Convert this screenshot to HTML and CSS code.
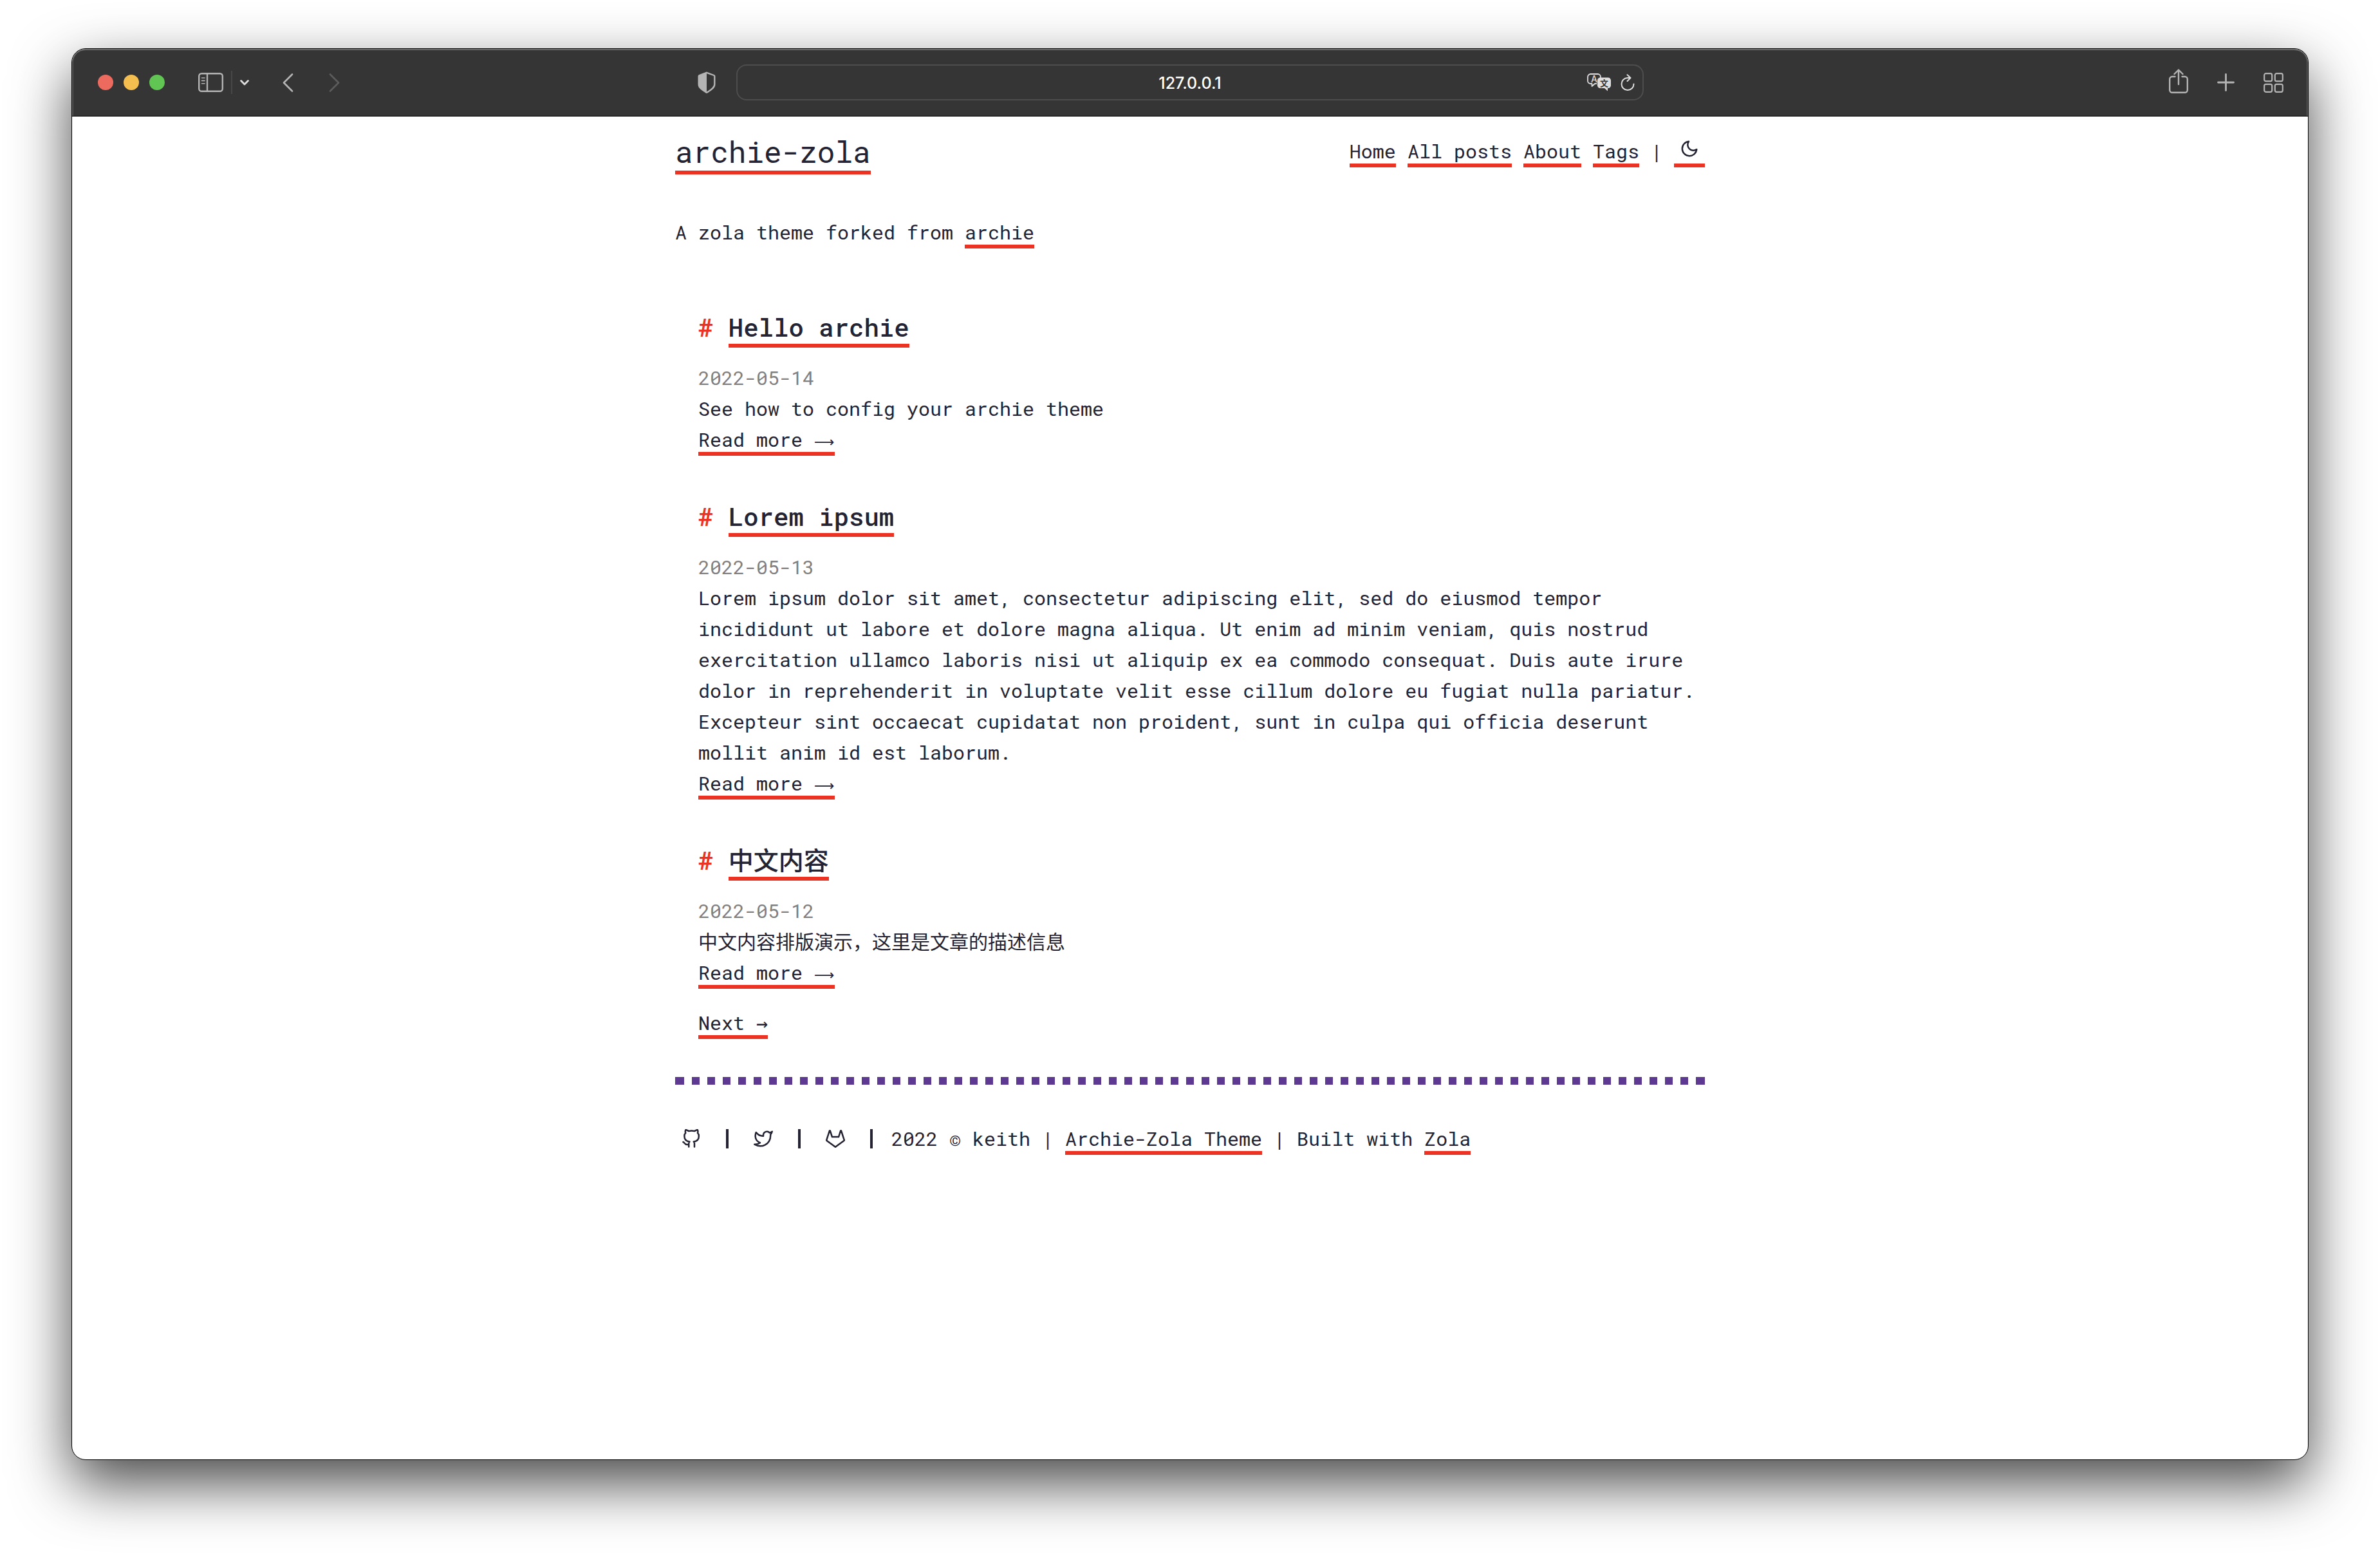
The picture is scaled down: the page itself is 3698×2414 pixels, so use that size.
FILE: index.html
```html
<!DOCTYPE html>
<html lang="en">
<head>
<meta charset="utf-8">
<meta name="viewport" content="width=device-width, initial-scale=1">
<title>archie-zola</title>
<link rel="stylesheet" href="styles.css">
</head>
<body>
<div class="window">
  <div class="toolbar">
    <div class="toolbar-left">
      <div class="lights">
        <button class="light light-close" aria-label="Close"></button>
        <button class="light light-minimize" aria-label="Minimize"></button>
        <button class="light light-zoom" aria-label="Zoom"></button>
      </div>
      <div class="sidebar-group">
        <button class="tool" aria-label="Show sidebar">
          <svg width="39" height="30" viewBox="0 0 39 30" fill="none" stroke="currentColor" stroke-width="2.4"><rect x="1.2" y="1.2" width="36.6" height="27.6" rx="4"/><path d="M14 1v28"/><path d="M5.5 8h4.5M5.5 12.4h4.5M5.5 16.8h4.5" stroke-width="1.6" stroke-linecap="round"/></svg>
        </button>
        <span class="tool-divider"></span>
        <button class="tool tool-bright" aria-label="Tab groups">
          <svg width="14" height="9" viewBox="0 0 14 9" fill="none" stroke="currentColor" stroke-width="2.8" stroke-linecap="round" stroke-linejoin="round"><path d="M1.6 1.6 7 7l5.400-5.400"/></svg>
        </button>
      </div>
      <div class="history">
        <button class="tool" aria-label="Back">
          <svg width="17" height="29" viewBox="0 0 17 29" fill="none" stroke="currentColor" stroke-width="2.600" stroke-linecap="round" stroke-linejoin="round"><path d="M15 1.500 2 14.500l13 13"/></svg>
        </button>
        <button class="tool tool-dim" aria-label="Forward">
          <svg width="17" height="29" viewBox="0 0 17 29" fill="none" stroke="currentColor" stroke-width="2.600" stroke-linecap="round" stroke-linejoin="round"><path d="m2 1.500 13 13-13 13"/></svg>
        </button>
      </div>
      <button class="tool shield" aria-label="Privacy report">
        <svg width="28" height="34" viewBox="0 0 28 34"><path d="M14 1.800 25.300 6c.7.300 1 .8 1 1.500V20c0 6-7 9.500-12.300 12.800C8.700 29.500 1.700 26 1.700 20V7.500c0-.7.300-1.200 1-1.500z" fill="none" stroke="currentColor" stroke-width="2.400"/><path d="M14 1.800v31C8.700 29.500 1.700 26 1.700 20V7.500c0-.7.300-1.200 1-1.500z" fill="currentColor"/></svg>
      </button>
    </div>
    <div class="address">
      <input class="address-input" type="text" value="127.0.0.1" aria-label="Address">
      <button class="tool tool-bright" aria-label="Translate">
        <svg width="38" height="28" viewBox="0 0 38 28"><path d="M15 16h-3l-4.500 4v-4H5.500A4.500 4.500 0 0 1 1 11.500v-6A4.500 4.500 0 0 1 5.500 1h11A4.500 4.500 0 0 1 21 5.500V7" fill="none" stroke="currentColor" stroke-width="1.800" stroke-linejoin="round"/><text class="glyph-latin" x="11" y="13.500" text-anchor="middle">A</text><path d="M20.500 6.500h12A4.500 4.500 0 0 1 37 11v7.500a4.500 4.500 0 0 1-4.500 4.500H32v4.500L27 23h-6.500a4.500 4.500 0 0 1-4.500-4.500V11a4.500 4.500 0 0 1 4.500-4.500z" fill="currentColor"/><text class="glyph-han" x="26.500" y="19.500" text-anchor="middle">文</text></svg>
      </button>
      <button class="tool tool-bright" aria-label="Reload">
        <svg width="22" height="27" viewBox="0 0 22 27" fill="none" stroke="currentColor" stroke-width="2" stroke-linecap="round" stroke-linejoin="round"><path d="M20.500 15.500A9.500 9.500 0 1 1 11 6h4.500M10.500 1.200l5 4.800-5 5"/></svg>
      </button>
    </div>
    <div class="toolbar-right">
      <button class="tool" aria-label="Share">
        <svg class="share-icon" width="30" height="38" viewBox="0 0 30 38" fill="none" stroke="currentColor" stroke-width="2.400" stroke-linecap="round" stroke-linejoin="round"><path d="M9.500 12H5.200a4 4 0 0 0-4 4v16.800a4 4 0 0 0 4 4h19.600a4 4 0 0 0 4-4V16a4 4 0 0 0-4-4h-4.300M15 24V2M8.500 8 15 1.500 21.500 8"/></svg>
      </button>
      <button class="tool" aria-label="New tab">
        <svg width="27" height="28" viewBox="0 0 27 28" fill="none" stroke="currentColor" stroke-width="2.800" stroke-linecap="round"><path d="M13.500 1.500v25M1.500 14h24"/></svg>
      </button>
      <button class="tool" aria-label="Tab overview">
        <svg width="31" height="31" viewBox="0 0 31 31" fill="none" stroke="currentColor" stroke-width="2.200"><rect x="1.200" y="1.200" width="12" height="12" rx="2.500"/><rect x="17.800" y="1.200" width="12" height="12" rx="2.500"/><rect x="1.200" y="17.800" width="12" height="12" rx="2.500"/><rect x="17.800" y="17.800" width="12" height="12" rx="2.500"/></svg>
      </button>
    </div>
  </div>

  <div class="content">
    <header class="site-header">
      <div class="site-title"><a href="#">archie-zola</a></div>
      <nav class="site-nav">
        <a href="#">Home</a> <a href="#">All posts</a> <a href="#">About</a> <a href="#">Tags</a> | <a class="theme-toggle" href="#" aria-label="Dark mode"><svg class="icon" viewBox="0 0 24 24"><path d="M21 12.790A9 9 0 1 1 11.210 3 7 7 0 0 0 21 12.790z"/></svg></a>
      </nav>
    </header>

    <p class="tagline">A zola theme forked from <a href="#">archie</a></p>

    <main class="posts">
      <article class="post">
        <h2 class="post-title"><a href="#">Hello archie</a></h2>
        <time class="post-date">2022-05-14</time>
        <p>See how to config your archie theme</p>
        <a href="#">Read more <span class="arrow">⟶</span></a>
      </article>
      <article class="post">
        <h2 class="post-title"><a href="#">Lorem ipsum</a></h2>
        <time class="post-date">2022-05-13</time>
        <p>Lorem ipsum dolor sit amet, consectetur adipiscing elit, sed do eiusmod tempor incididunt ut labore et dolore magna aliqua. Ut enim ad minim veniam, quis nostrud exercitation ullamco laboris nisi ut aliquip ex ea commodo consequat. Duis aute irure dolor in reprehenderit in voluptate velit esse cillum dolore eu fugiat nulla pariatur. Excepteur sint occaecat cupidatat non proident, sunt in culpa qui officia deserunt mollit anim id est laborum.</p>
        <a href="#">Read more <span class="arrow">⟶</span></a>
      </article>
      <article class="post">
        <h2 class="post-title"><a href="#" lang="zh-CN">中文内容</a></h2>
        <time class="post-date">2022-05-12</time>
        <p lang="zh-CN">中文内容排版演示，这里是文章的描述信息</p>
        <a href="#">Read more <span class="arrow">⟶</span></a>
      </article>
      <div class="pagination"><a href="#">Next →</a></div>
    </main>

    <hr class="dots">

    <footer class="site-footer">
      <div class="social">
        <a href="#" aria-label="GitHub"><svg class="icon" viewBox="0 0 24 24"><path d="M9 19c-5 1.500-5-2.500-7-3m14 6v-3.870a3.370 3.370 0 0 0-.940-2.610c3.140-.350 6.440-1.540 6.440-7A5.440 5.440 0 0 0 20 4.770 5.070 5.070 0 0 0 19.910 1S18.730.650 16 2.480a13.380 13.380 0 0 0-7 0C6.270.650 5.090 1 5.090 1A5.070 5.070 0 0 0 5 4.770a5.440 5.440 0 0 0-1.500 3.780c0 5.420 3.300 6.610 6.440 7A3.370 3.370 0 0 0 9 18.130V22"/></svg></a>
        <span class="bar"></span>
        <a href="#" aria-label="Twitter"><svg class="icon" viewBox="0 0 24 24"><path d="M23 3a10.900 10.900 0 0 1-3.140 1.530 4.480 4.480 0 0 0-7.860 3v1A10.660 10.660 0 0 1 3 4s-4 9 5 13a11.640 11.640 0 0 1-7 2c9 5 20 0 20-11.500a4.500 4.500 0 0 0-.080-.830A7.720 7.720 0 0 0 23 3z"/></svg></a>
        <span class="bar"></span>
        <a href="#" aria-label="GitLab"><svg class="icon" viewBox="0 0 24 24"><path d="M22.650 14.390 12 22.130 1.350 14.390a.840.840 0 0 1-.300-.940l1.220-3.780 2.440-7.510A.420.420 0 0 1 4.820 2a.430.430 0 0 1 .580 0 .420.420 0 0 1 .110.180l2.440 7.490h8.100l2.440-7.510A.420.420 0 0 1 18.600 2a.430.430 0 0 1 .580 0 .420.420 0 0 1 .110.180l2.440 7.510L23 13.450a.840.840 0 0 1-.350.940z"/></svg></a>
        <span class="bar"></span>
      </div>
      <p>2022 © keith | <a href="#">Archie-Zola Theme</a> | Built with <a href="#">Zola</a></p>
    </footer>
  </div>
</div>
</body>
</html>
```
FILE: styles.css
```css
:root {
  --ink: #232333;
  --accent: #eb3223;
  --divider: #5e3992;
  --muted: #808080;
  --chrome: #353535;
}

* {
  box-sizing: border-box;
}

body {
  margin: 0;
  min-height: 100vh;
  padding: 75px 111px 146px;
  display: flex;
  background: #fff;
  color: var(--ink);
  font: 30px/48px "Roboto Mono", "DejaVu Sans Mono", "Noto Sans CJK SC", monospace;
}

p, h2 {
  margin: 0;
}

.window {
  flex: 1;
  min-width: 0;
  border: 1px solid #000;
  border-radius: 22px;
  background: #fff;
  overflow: hidden;
  box-shadow: 0 36px 90px rgba(0, 0, 0, 0.72);
}

/* Browser toolbar */

.toolbar {
  display: grid;
  grid-template-columns: 1fr minmax(0, 1410px) 1fr;
  align-items: center;
  height: 105px;
  background: var(--chrome);
  border-bottom: 1px solid #000;
  border-radius: 21px 21px 0 0;
  box-shadow: inset 0 2px #6c6c6c, inset 2px 0 #555, inset -2px 0 #555;
}

.toolbar-left,
.toolbar-right,
.lights,
.sidebar-group,
.history {
  display: flex;
  align-items: center;
}

.toolbar-left {
  gap: 52px;
  padding: 0 32px 0 40px;
}

.toolbar-right {
  justify-content: flex-end;
  gap: 45px;
  padding-right: 38px;
}

.lights {
  gap: 16px;
}

.sidebar-group {
  gap: 12px;
}

.history {
  gap: 55px;
}

.light {
  width: 24px;
  height: 24px;
  padding: 0;
  border: 0;
  border-radius: 50%;
}

.light-close { background: #ed6a5e; }
.light-minimize { background: #f5bf4f; }
.light-zoom { background: #61c554; }

.tool {
  display: flex;
  padding: 0;
  border: 0;
  background: none;
  color: #b4b4b4;
}

.tool-bright { color: #dedede; }
.tool-dim { color: #5c5c5c; }

.tool-divider {
  width: 2px;
  height: 36px;
  background: #484848;
}

.shield {
  margin-left: auto;
}

.share-icon {
  margin-bottom: 4px;
}

.address {
  display: flex;
  align-items: center;
  gap: 14px;
  height: 56px;
  padding: 0 12px 0 100px;
  border: 2px solid #4d4d4d;
  border-radius: 16px;
}

.address-input {
  flex: 1;
  min-width: 0;
  padding: 2px 0 0;
  border: 0;
  outline: 0;
  background: none;
  color: #fff;
  font: 500 25px/32px Inter, sans-serif;
  text-align: center;
}

.glyph-latin {
  fill: currentColor;
  font: 500 14px Inter, sans-serif;
}

.glyph-han {
  fill: var(--chrome);
  font: 700 13px "Noto Sans CJK SC", sans-serif;
}

/* Page */

.content {
  max-width: 1600px;
  margin: 0 auto;
  padding: 17px 0;
}

.content a {
  color: inherit;
  text-decoration: none;
  border-bottom: 6px solid var(--accent);
}

.icon {
  width: 30px;
  height: 30px;
  fill: none;
  stroke: currentColor;
  stroke-width: 2;
  stroke-linecap: round;
  stroke-linejoin: round;
}

.site-header {
  display: flex;
  flex-wrap: wrap;
  justify-content: space-between;
  align-items: center;
  margin-bottom: 65px;
}

.site-title {
  font-size: 46px;
  line-height: 74px;
}

.content .theme-toggle {
  padding: 0 9px;
}

.posts {
  padding: 94px 0 0 36px;
}

.post {
  margin-bottom: 66px;
}

.post:last-of-type {
  margin-bottom: 30px;
}

.post-title {
  margin-bottom: 26px;
  font-size: 39px;
  line-height: 58px;
  font-weight: 500;
}

.post-title::before {
  content: "# ";
  color: var(--accent);
  font-weight: 700;
}

.post-date {
  display: block;
  color: var(--muted);
}

.arrow {
  font-family: "DejaVu Sans", sans-serif;
  font-size: 22px;
  line-height: 1;
}

.dots {
  height: 12px;
  margin: 60px 0;
  border: solid var(--divider);
  border-width: 0 2px;
  background: repeating-linear-gradient(90deg, var(--divider) 0 12px, transparent 12px 24px);
}

.site-footer {
  display: flex;
  flex-wrap: wrap;
  align-items: center;
  gap: 29px;
}

.social {
  display: flex;
  align-items: center;
  gap: 39px;
  padding-left: 10px;
}

.content .social a {
  display: flex;
  border: 0;
}

.bar {
  width: 4px;
  height: 30px;
  background: var(--ink);
}
```
